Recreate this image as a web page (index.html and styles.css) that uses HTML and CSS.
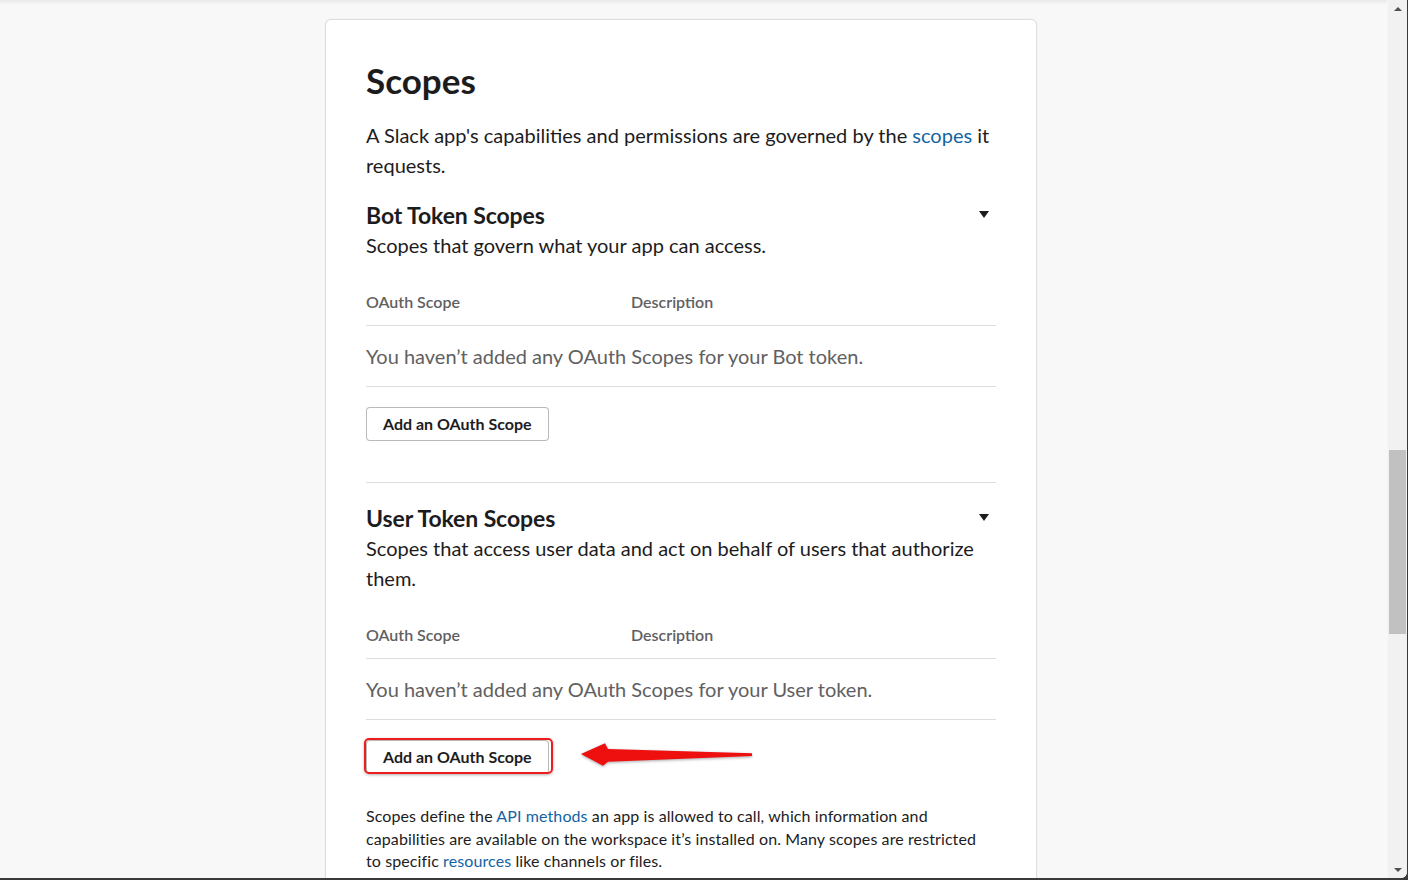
FILE: index.html
```html
<!DOCTYPE html>
<html lang="en">
<head>
<meta charset="utf-8">
<title>Scopes</title>
<link rel="stylesheet" href="styles.css">
</head>
<body>
<div class="window">
  <main class="page">
    <section class="card">
      <h2 class="card-title">Scopes</h2>
      <p class="lead">A Slack app's capabilities and permissions are governed by the <a href="#" class="link">scopes</a> it requests.</p>

      <div class="token-section">
        <div class="section-head">
          <h3 class="section-title">Bot Token Scopes</h3>
          <span class="caret"></span>
        </div>
        <p class="desc">Scopes that govern what your app can access.</p>
        <div class="scope-table">
          <div class="thead"><span class="col-scope">OAuth Scope</span><span class="col-desc">Description</span></div>
          <div class="empty-row">You haven’t added any OAuth Scopes for your Bot token.</div>
        </div>
        <div class="btn-wrap"><button class="btn">Add an OAuth Scope</button></div>
      </div>

      <div class="token-section divided">
        <div class="section-head">
          <h3 class="section-title">User Token Scopes</h3>
          <span class="caret"></span>
        </div>
        <p class="desc">Scopes that access user data and act on behalf of users that authorize them.</p>
        <div class="scope-table">
          <div class="thead"><span class="col-scope">OAuth Scope</span><span class="col-desc">Description</span></div>
          <div class="empty-row">You haven’t added any OAuth Scopes for your User token.</div>
        </div>
        <div class="btn-wrap">
          <button class="btn">Add an OAuth Scope</button>
          <span class="highlight"></span>
          <svg class="arrow" width="180" height="30" viewBox="0 0 180 30">
            <polygon points="3,14 27,3.3 30,9 174,13.3 174,16 30,21.7 25,25.7" fill="#ee0f0f"/>
          </svg>
        </div>
      </div>

      <p class="footnote">Scopes define the <a href="#" class="link">API methods</a> an app is allowed to call, which information and capabilities are available on the workspace it’s installed on. Many scopes are restricted to specific <a href="#" class="link">resources</a> like channels or files.</p>
    </section>
  </main>
  <aside class="scrollbar">
    <div class="sb-btn"><span class="sb-up"></span></div>
    <div class="sb-track"><div class="sb-thumb"></div></div>
    <div class="sb-btn"><span class="sb-down"></span></div>
  </aside>
</div>
</body>
</html>
```

FILE: styles.css
```css
* { box-sizing: border-box; }

html, body {
  margin: 0;
  padding: 0;
  width: 1408px;
  height: 880px;
  overflow: hidden;
  background: #3a3a3a;
}

body {
  font-family: Lato, "Noto Sans", "Liberation Sans", sans-serif;
  color: #1d1c1d;
}

.window {
  display: flex;
  width: 1407px;
  height: 878px;
  overflow: hidden;
  border-bottom-right-radius: 6px;
  background: #f8f8f8;
}

.page {
  flex: 1;
  padding: 19px 0 0 325px;
  background: linear-gradient(#e9e9e9, #f8f8f8 5px);
  overflow: hidden;
}

.card {
  width: 712px;
  min-height: 1000px;
  background: #fff;
  border: 1px solid #dddddd;
  border-radius: 6px;
  box-shadow: 0 0 2px rgba(0,0,0,0.06);
  padding: 39px 40px 0 40px;
}

.card-title {
  margin: 0 0 18px;
  font-size: 35px;
  line-height: 43px;
  font-weight: 700;
}

.lead {
  margin: 0;
  font-size: 20px;
  line-height: 30px;
}

.link {
  color: #1264a3;
  text-decoration: none;
}

.token-section {
  padding-top: 20px;
}

.token-section.divided {
  margin-top: 41px;
  border-top: 1px solid #dddddd;
  padding-top: 20px;
}

.section-head {
  display: flex;
  align-items: flex-start;
  justify-content: space-between;
  height: 30px;
}

.section-title {
  margin: 0;
  font-size: 23px;
  line-height: 30px;
  font-weight: 700;
  letter-spacing: -0.1px;
}

.caret {
  width: 0;
  height: 0;
  border-left: 5.5px solid transparent;
  border-right: 5.5px solid transparent;
  border-top: 7px solid #1d1c1d;
  margin-right: 7px;
  margin-top: 11px;
}

.desc {
  margin: 0;
  font-size: 20px;
  line-height: 30px;
}

.thead {
  display: flex;
  padding: 30px 0 11px;
  border-bottom: 1px solid #dddddd;
  font-size: 16px;
  line-height: 24px;
  font-weight: 600;
  color: #616061;
}

.col-scope {
  width: 265px;
}

.empty-row {
  padding: 15px 0;
  border-bottom: 1px solid #dddddd;
  font-size: 20px;
  line-height: 30px;
  color: #616061;
}

.btn-wrap {
  position: relative;
  margin-top: 20px;
  height: 34px;
}

.btn {
  height: 34px;
  padding: 0 16px 1px 16px;
  font-family: inherit;
  font-size: 16px;
  font-weight: 700;
  color: #1d1c1d;
  background: #fff;
  border: 1px solid rgba(29,28,29,0.3);
  border-radius: 4px;
}

.highlight {
  position: absolute;
  left: -2px;
  top: -2px;
  width: 189px;
  height: 36px;
  border: 2px solid #ee1c1c;
  border-radius: 5px;
  box-shadow: 0 1px 3px rgba(0,0,0,0.3);
}

.arrow {
  position: absolute;
  left: 212px;
  top: 0;
  filter: drop-shadow(0 1px 1.5px rgba(0,0,0,0.35));
}

.footnote {
  margin: 31px 0 0;
  max-width: 625px;
  font-size: 16px;
  line-height: 22.5px;
  letter-spacing: 0.1px;
}

.scrollbar {
  width: 20px;
  display: flex;
  flex-direction: column;
  background: #f1f1f1;
  border-left: 1px solid #f6f6f6;
}

.sb-btn {
  height: 17px;
  display: flex;
  align-items: center;
  justify-content: center;
}

.sb-up {
  width: 0;
  height: 0;
  border-left: 4px solid transparent;
  border-right: 4px solid transparent;
  border-bottom: 4px solid #505050;
}

.sb-down {
  width: 0;
  height: 0;
  border-left: 4px solid transparent;
  border-right: 4px solid transparent;
  border-top: 4px solid #505050;
}

.sb-track {
  flex: 1;
  padding: 433px 1px 0 1px;
}

.sb-thumb {
  height: 184px;
  background: #c1c1c1;
}
```
